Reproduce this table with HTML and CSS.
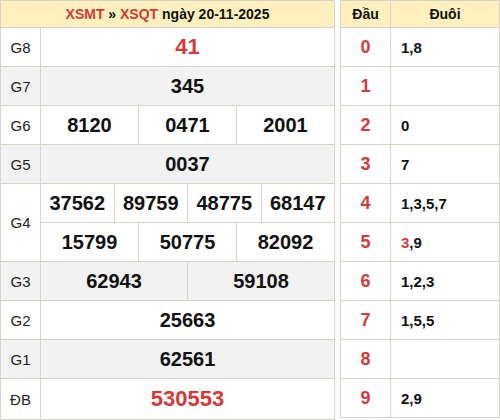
FILE: index.html
```html
<!DOCTYPE html>
<html>
<head>
<meta charset="utf-8">
<link rel="stylesheet" href="styles.css">
</head>
<body>
<div class="wrap">
  <table class="kq">
    <colgroup>
      <col class="c-label">
      <col><col><col><col><col><col><col><col><col><col><col><col>
    </colgroup>
    <thead>
      <tr><th colspan="13" class="title"><span class="red">XSMT</span> » <span class="red">XSQT</span> ngày 20-11-2025</th></tr>
    </thead>
    <tbody>
      <tr><td class="lbl">G8</td><td colspan="12" class="num big red">41</td></tr>
      <tr class="alt"><td class="lbl">G7</td><td colspan="12" class="num">345</td></tr>
      <tr><td class="lbl">G6</td><td colspan="4" class="num">8120</td><td colspan="4" class="num">0471</td><td colspan="4" class="num">2001</td></tr>
      <tr class="alt"><td class="lbl">G5</td><td colspan="12" class="num">0037</td></tr>
      <tr><td class="lbl" rowspan="2">G4</td><td colspan="3" class="num">37562</td><td colspan="3" class="num">89759</td><td colspan="3" class="num">48775</td><td colspan="3" class="num">68147</td></tr>
      <tr><td colspan="4" class="num">15799</td><td colspan="4" class="num">50775</td><td colspan="4" class="num">82092</td></tr>
      <tr class="alt"><td class="lbl">G3</td><td colspan="6" class="num">62943</td><td colspan="6" class="num">59108</td></tr>
      <tr><td class="lbl">G2</td><td colspan="12" class="num">25663</td></tr>
      <tr class="alt"><td class="lbl">G1</td><td colspan="12" class="num">62561</td></tr>
      <tr class="last"><td class="lbl">ĐB</td><td colspan="12" class="num big red">530553</td></tr>
    </tbody>
  </table>
  <table class="lt">
    <colgroup><col class="c-dau"><col></colgroup>
    <thead>
      <tr><th>Đầu</th><th>Đuôi</th></tr>
    </thead>
    <tbody>
      <tr><td class="dau">0</td><td class="duoi">1,8</td></tr>
      <tr><td class="dau">1</td><td class="duoi"></td></tr>
      <tr><td class="dau">2</td><td class="duoi">0</td></tr>
      <tr><td class="dau">3</td><td class="duoi">7</td></tr>
      <tr><td class="dau">4</td><td class="duoi">1,3,5,7</td></tr>
      <tr><td class="dau">5</td><td class="duoi"><span class="red">3</span>,9</td></tr>
      <tr><td class="dau">6</td><td class="duoi">1,2,3</td></tr>
      <tr><td class="dau">7</td><td class="duoi">1,5,5</td></tr>
      <tr><td class="dau">8</td><td class="duoi"></td></tr>
      <tr><td class="dau">9</td><td class="duoi">2,9</td></tr>
    </tbody>
  </table>
</div>
</body>
</html>
```

FILE: styles.css
```css
html, body {
  margin: 0;
  padding: 0;
  background: #fff;
}
body {
  font-family: "Liberation Sans", Arial, sans-serif;
  color: #111;
}
.wrap {
  display: flex;
  align-items: flex-start;
  gap: 5px;
}
table {
  border-collapse: collapse;
  table-layout: fixed;
}
th, td {
  border: 1px solid #d9d2c9;
  padding: 0;
  text-align: center;
}
th {
  background: #fff0bd;
  font-weight: bold;
  font-size: 14px;
  height: 26px;
}
.kq {
  width: 335px;
}
.c-label {
  width: 40px;
}
.kq td {
  height: 38px;
}
.kq .last td {
  height: 40px;
}
.alt td {
  background: #f2f2f2;
}
.lbl {
  font-size: 15px;
  color: #222;
}
.num {
  font-size: 20px;
  font-weight: bold;
}
.num.big {
  font-size: 22px;
}
.red {
  color: #d33a3a;
}
.lt {
  width: 160px;
}
.c-dau {
  width: 50px;
}
.lt td {
  height: 38px;
}
.dau {
  color: #d33a3a;
  font-weight: bold;
  font-size: 18px;
}
.duoi {
  text-align: left;
  padding-left: 10px;
  font-weight: bold;
  font-size: 15px;
}
```
